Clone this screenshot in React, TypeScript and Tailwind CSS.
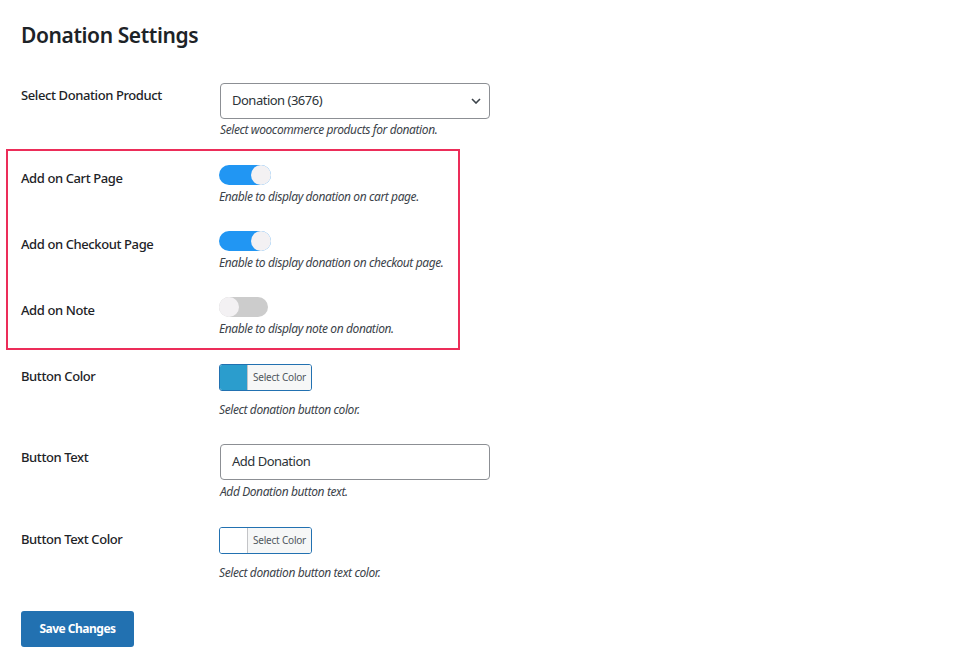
import React from "react";

const font = { fontFamily: '"Noto Sans", "Open Sans", sans-serif' };

function Toggle({ on }: { on: boolean }) {
  return on ? (
    <div className="flex h-[20px] w-[52px] items-center justify-end rounded-full bg-[#2196f3]">
      <div className="h-[20px] w-[20px] rounded-full bg-[#f3f1f3]" />
    </div>
  ) : (
    <div className="flex h-[20px] w-[49px] items-center justify-start rounded-full bg-[#cccccc]">
      <div className="h-[20px] w-[20px] rounded-full bg-[#f3f1f3]" />
    </div>
  );
}

function Help({ children, mt }: { children: React.ReactNode; mt: string }) {
  return (
    <div className={`${mt} text-[12px] italic leading-[18px] tracking-[-0.4px] text-[#3c434a]`}>
      {children}
    </div>
  );
}

function Label({ children, pt, w }: { children: React.ReactNode; pt: string; w: string }) {
  return (
    <div className={`${w} ${pt} shrink-0 text-[13px] font-medium leading-[20px] tracking-[-0.4px] text-[#1d2327]`}>
      {children}
    </div>
  );
}

function ColorButton({ swatch }: { swatch: string }) {
  return (
    <div className="flex h-[27px] w-[93px] overflow-hidden rounded-[3px] border border-[#2271b1]">
      <div className="w-[27px] shrink-0" style={{ backgroundColor: swatch }} />
      <div className="flex flex-1 items-center justify-center border-l border-[#c3c4c7] bg-[#f6f7f7] text-[10px] tracking-[-0.2px] text-[#50575e]">
        Select Color
      </div>
    </div>
  );
}

export default function App() {
  return (
    <div className="min-h-[669px] w-[969px] bg-white" style={font}>
      <h1 className="pl-[21px] pt-[19px] text-[21px] font-semibold leading-[32px] tracking-[-0.4px] text-[#1d2327]">
        Donation Settings
      </h1>

      {/* Row 1 */}
      <div className="mt-[32px] flex pl-[21px]">
        <Label w="w-[199px]" pt="pt-[2px]">Select Donation Product</Label>
        <div className="flex flex-col">
          <div className="flex h-[36px] w-[270px] items-center justify-between rounded-[4px] border border-[#8c8f94] pl-[11px] pr-[8px] text-[13px] tracking-[-0.5px] text-[#2c3338]">
            <span>Donation (3676)</span>
            <svg width="10" height="6" viewBox="0 0 10 6" fill="none">
              <path d="M1 1l4 4 4-4" stroke="#3c434a" strokeWidth="1.6" />
            </svg>
          </div>
          <Help mt="mt-[2px]">Select woocommerce products for donation.</Help>
        </div>
      </div>

      {/* Highlighted group */}
      <div className="ml-[6px] mt-[10px] w-[454px] border-2 border-[#ec2d59] pb-[10px] pt-[14px]">
        <div className="flex pl-[13px]">
          <Label w="w-[198px]" pt="pt-[3px]">Add on Cart Page</Label>
          <div className="flex flex-col">
            <Toggle on />
            <Help mt="mt-[3px]">Enable to display donation on cart page.</Help>
          </div>
        </div>
        <div className="mt-[25px] flex pl-[13px]">
          <Label w="w-[198px]" pt="pt-[3px]">Add on Checkout Page</Label>
          <div className="flex flex-col">
            <Toggle on />
            <Help mt="mt-[3px]">Enable to display donation on checkout page.</Help>
          </div>
        </div>
        <div className="mt-[25px] flex pl-[13px]">
          <Label w="w-[198px]" pt="pt-[3px]">Add on Note</Label>
          <div className="flex flex-col">
            <Toggle on={false} />
            <Help mt="mt-[3px]">Enable to display note on donation.</Help>
          </div>
        </div>
      </div>

      {/* Button Color */}
      <div className="mt-[14px] flex pl-[21px]">
        <Label w="w-[198px]" pt="pt-[2px]">Button Color</Label>
        <div className="flex flex-col">
          <ColorButton swatch="#2b9dcd" />
          <Help mt="mt-[10px]">Select donation button color.</Help>
        </div>
      </div>

      {/* Button Text */}
      <div className="mt-[25px] flex pl-[21px]">
        <Label w="w-[199px]" pt="pt-[3px]">Button Text</Label>
        <div className="flex flex-col">
          <div className="flex h-[36px] w-[270px] items-center rounded-[4px] border border-[#8c8f94] pl-[11px] text-[13px] tracking-[-0.5px] text-[#2c3338]">
            Add Donation
          </div>
          <Help mt="mt-[3px]">Add Donation button text.</Help>
        </div>
      </div>

      {/* Button Text Color */}
      <div className="mt-[26px] flex pl-[21px]">
        <Label w="w-[198px]" pt="pt-[2px]">Button Text Color</Label>
        <div className="flex flex-col">
          <ColorButton swatch="#ffffff" />
          <Help mt="mt-[10px]">Select donation button text color.</Help>
        </div>
      </div>

      <div className="mt-[29px] pl-[21px]">
        <button className="flex h-[36px] w-[113px] items-center justify-center rounded-[3px] bg-[#2271b1] text-[12px] font-bold tracking-[-0.5px] text-white">
          Save Changes
        </button>
      </div>
    </div>
  );
}
